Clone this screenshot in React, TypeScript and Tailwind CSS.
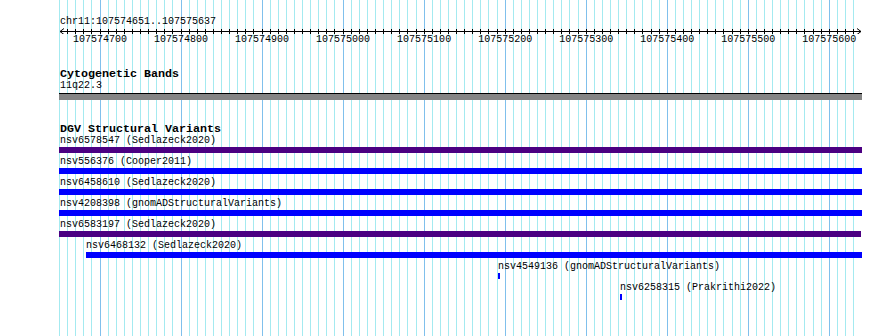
import React from "react";

const VIEW_START = 107574651;
const VIEW_END = 107575637;
const PX_PER_BP = 0.81032;

// bp -> pixel column on the page
const toX = (bp: number) => 100 + (bp - 107574700) * PX_PER_BP;

const gridBps: number[] = [];
for (let bp = 107574650; bp <= 107575630; bp += 10) gridBps.push(bp);

const majorBps = gridBps.filter((bp) => bp % 100 === 0);

type Feature = {
  name: string;
  source: string;
  color: string;
  x: number;
  w: number;
  labelX: number;
};

const features: Feature[] = [
  { name: "nsv6578547", source: "Sedlazeck2020", color: "bg-[#4b0082]", x: 59, w: 803, labelX: 60 },
  { name: "nsv556376", source: "Cooper2011", color: "bg-[#0000ff]", x: 59, w: 803, labelX: 60 },
  { name: "nsv6458610", source: "Sedlazeck2020", color: "bg-[#0000ff]", x: 59, w: 803, labelX: 60 },
  { name: "nsv4208398", source: "gnomADStructuralVariants", color: "bg-[#0000ff]", x: 59, w: 803, labelX: 60 },
  { name: "nsv6583197", source: "Sedlazeck2020", color: "bg-[#4b0082]", x: 59, w: 802, labelX: 60 },
  { name: "nsv6468132", source: "Sedlazeck2020", color: "bg-[#0000ff]", x: 86, w: 776, labelX: 86 },
  { name: "nsv4549136", source: "gnomADStructuralVariants", color: "bg-[#0000ff]", x: 498, w: 2, labelX: 498 },
  { name: "nsv6258315", source: "Prakrithi2022", color: "bg-[#0000ff]", x: 620, w: 2, labelX: 620 },
];

function GridLines() {
  return (
    <svg className="absolute inset-0" width={890} height={336} shapeRendering="crispEdges">
      {gridBps.map((bp) => {
        const x = Math.floor(toX(bp)) + 0.5;
        const major = bp % 100 === 0;
        return (
          <line
            key={bp}
            x1={x}
            x2={x}
            y1={0}
            y2={336}
            stroke={major ? "#80c0ec" : "#a4eaf0"}
            strokeWidth={1}
          />
        );
      })}
    </svg>
  );
}

function Ruler() {
  const left = 60;
  const right = 861;
  return (
    <div>
      <div className="h-3 leading-3 text-[10px] pl-[60px]">
        chr11:{VIEW_START}..{VIEW_END}
      </div>
      <svg width={890} height={6} className="block" shapeRendering="crispEdges">
        <line x1={left} x2={right} y1={3.5} y2={3.5} stroke="#000" />
        {gridBps.slice(1).map((bp) => {
          const x = Math.floor(toX(bp)) + 0.5;
          return <line key={bp} x1={x} x2={x} y1={1} y2={6} stroke="#000" />;
        })}
        <polyline points={`${left + 4},0.5 ${left},3.5 ${left + 4},6.5`} fill="none" stroke="#000" shapeRendering="auto" />
        <polyline points={`${right - 4},0.5 ${right},3.5 ${right - 4},6.5`} fill="none" stroke="#000" shapeRendering="auto" />
      </svg>
      <div className="relative h-3 leading-3 text-[10px]">
        {majorBps.map((bp) => (
          <span
            key={bp}
            className="absolute top-0 -translate-x-1/2 whitespace-nowrap"
            style={{ left: toX(bp) }}
          >
            {bp}
          </span>
        ))}
      </div>
    </div>
  );
}

function TrackTitle({ children }: { children: React.ReactNode }) {
  return (
    <div className="h-[11px] leading-[11px] text-[11.67px] font-bold pl-[60px] whitespace-nowrap">
      {children}
    </div>
  );
}

function FeatureRow({ f }: { f: Feature }) {
  return (
    <div className="h-[21px]">
      <div className="h-3 leading-3 text-[10px] whitespace-nowrap" style={{ paddingLeft: f.labelX }}>
        {f.name} ({f.source})
      </div>
      <div className={`h-[6px] ${f.color}`} style={{ marginLeft: f.x, width: f.w }} />
    </div>
  );
}

export default function App() {
  return (
    <div className="relative w-[890px] h-[336px] overflow-hidden bg-white text-black font-['Liberation_Mono',monospace]">
      <GridLines />
      <div className="relative pt-[16px]">
        <Ruler />

        <div className="mt-[23px]">
          <TrackTitle>Cytogenetic Bands</TrackTitle>
          <div className="h-3 leading-3 text-[10px] pl-[60px]">11q22.3</div>
          <div className="mt-px ml-[59px] w-[803px] h-[7px] border-t border-black bg-[#858585]" />
        </div>

        <div className="mt-[24px]">
          <TrackTitle>DGV Structural Variants</TrackTitle>
          {features.map((f) => (
            <FeatureRow key={f.name} f={f} />
          ))}
        </div>
      </div>
    </div>
  );
}
